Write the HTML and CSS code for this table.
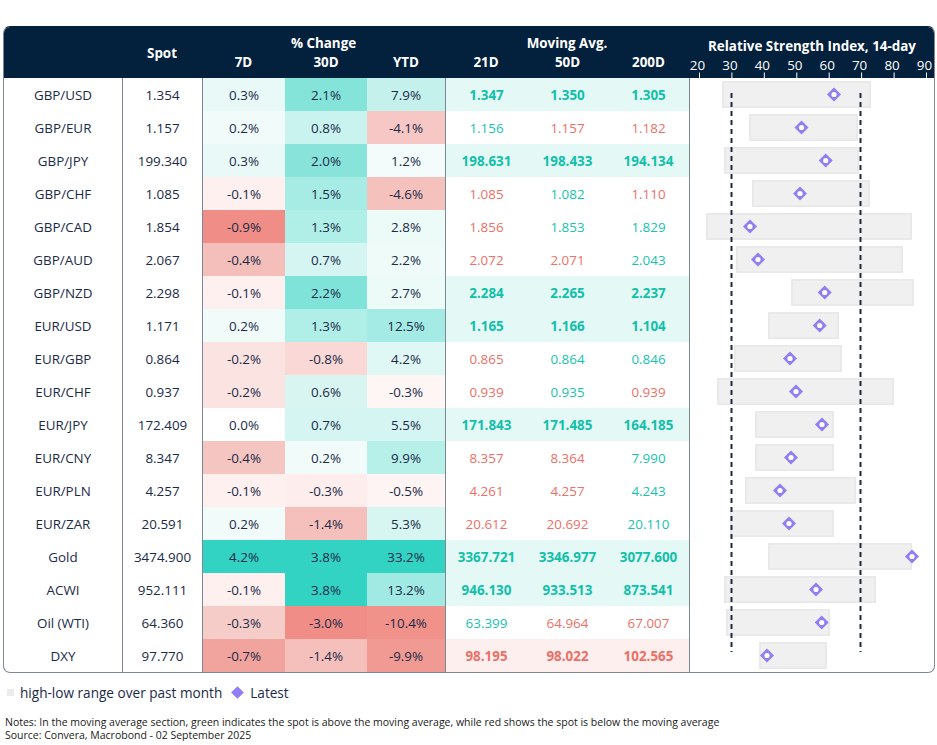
FILE: index.html
```html
<!DOCTYPE html>
<html>
<head>
<meta charset="utf-8">
<link rel="stylesheet" href="styles.css">
</head>
<body>
<div class="page">
  <div class="table">
    <div class="head cols">
      <div class="h-name"></div>
      <div class="h-spot">Spot</div>
      <div class="h-group pct">
        <div class="h-title">% Change</div>
        <div class="h-sub">7D</div><div class="h-sub">30D</div><div class="h-sub">YTD</div>
      </div>
      <div class="h-group ma">
        <div class="h-title">Moving Avg.</div>
        <div class="h-sub">21D</div><div class="h-sub">50D</div><div class="h-sub">200D</div>
      </div>
      <div class="h-rsi">
        <div class="rsi-title">Relative Strength Index, 14-day</div>
        <svg class="scale" width="245" height="23" viewBox="0 0 245 23">
          <g class="scale-labels">
            <text x="8.5" y="9.5">20</text>
            <text x="40.9" y="9.5">30</text>
            <text x="73.3" y="9.5">40</text>
            <text x="105.8" y="9.5">50</text>
            <text x="138.2" y="9.5">60</text>
            <text x="170.6" y="9.5">70</text>
            <text x="203.1" y="9.5">80</text>
            <text x="235.5" y="9.5">90</text>
          </g>
          <g class="ticks">
            <line x1="10.5" y1="17.5" x2="10.5" y2="23"/>
            <line x1="42.9" y1="17.5" x2="42.9" y2="23"/>
            <line x1="75.3" y1="17.5" x2="75.3" y2="23"/>
            <line x1="107.8" y1="17.5" x2="107.8" y2="23"/>
            <line x1="140.2" y1="17.5" x2="140.2" y2="23"/>
            <line x1="172.6" y1="17.5" x2="172.6" y2="23"/>
            <line x1="205.1" y1="17.5" x2="205.1" y2="23"/>
            <line x1="237.5" y1="17.5" x2="237.5" y2="23"/>
          </g>
        </svg>
      </div>
    </div>

    <div class="body cols">
      <div class="chart">
        <svg width="244" height="594" viewBox="0 0 244 594">
          <g class="bars">
            <rect x="33" y="4" width="147" height="25"/>
            <rect x="60" y="37" width="107" height="25"/>
            <rect x="35" y="70" width="133" height="25"/>
            <rect x="63" y="103" width="116" height="25"/>
            <rect x="17" y="136" width="204" height="25"/>
            <rect x="47" y="169" width="165" height="25"/>
            <rect x="102" y="202" width="121" height="25"/>
            <rect x="79" y="235" width="69" height="25"/>
            <rect x="45" y="268" width="106" height="25"/>
            <rect x="28" y="301" width="175" height="25"/>
            <rect x="66" y="334" width="77" height="25"/>
            <rect x="66" y="367" width="77" height="25"/>
            <rect x="56" y="400" width="109" height="25"/>
            <rect x="41" y="433" width="102" height="25"/>
            <rect x="79" y="466" width="142" height="25"/>
            <rect x="35" y="499" width="150" height="25"/>
            <rect x="37" y="532" width="102" height="25"/>
            <rect x="70" y="565" width="66" height="25"/>
          </g>
          <g class="dash">
            <line x1="41.5" y1="15" x2="41.5" y2="574"/>
            <line x1="170.5" y1="15" x2="170.5" y2="574"/>
          </g>
          <g class="marks">
            <g transform="translate(144 16.5)"><path d="M0 -7 L7 0 L0 7 L-7 0 Z"/><circle r="2.6"/></g>
            <g transform="translate(111.5 49.5)"><path d="M0 -7 L7 0 L0 7 L-7 0 Z"/><circle r="2.6"/></g>
            <g transform="translate(135.7 82.5)"><path d="M0 -7 L7 0 L0 7 L-7 0 Z"/><circle r="2.6"/></g>
            <g transform="translate(110 115.5)"><path d="M0 -7 L7 0 L0 7 L-7 0 Z"/><circle r="2.6"/></g>
            <g transform="translate(60 148.5)"><path d="M0 -7 L7 0 L0 7 L-7 0 Z"/><circle r="2.6"/></g>
            <g transform="translate(68 181.5)"><path d="M0 -7 L7 0 L0 7 L-7 0 Z"/><circle r="2.6"/></g>
            <g transform="translate(134.7 214.5)"><path d="M0 -7 L7 0 L0 7 L-7 0 Z"/><circle r="2.6"/></g>
            <g transform="translate(129.7 247.5)"><path d="M0 -7 L7 0 L0 7 L-7 0 Z"/><circle r="2.6"/></g>
            <g transform="translate(100 280.5)"><path d="M0 -7 L7 0 L0 7 L-7 0 Z"/><circle r="2.6"/></g>
            <g transform="translate(106 313.5)"><path d="M0 -7 L7 0 L0 7 L-7 0 Z"/><circle r="2.6"/></g>
            <g transform="translate(132 346.5)"><path d="M0 -7 L7 0 L0 7 L-7 0 Z"/><circle r="2.6"/></g>
            <g transform="translate(101 379.5)"><path d="M0 -7 L7 0 L0 7 L-7 0 Z"/><circle r="2.6"/></g>
            <g transform="translate(90 412.5)"><path d="M0 -7 L7 0 L0 7 L-7 0 Z"/><circle r="2.6"/></g>
            <g transform="translate(99 445.5)"><path d="M0 -7 L7 0 L0 7 L-7 0 Z"/><circle r="2.6"/></g>
            <g transform="translate(222 478.5)"><path d="M0 -7 L7 0 L0 7 L-7 0 Z"/><circle r="2.6"/></g>
            <g transform="translate(126 511.5)"><path d="M0 -7 L7 0 L0 7 L-7 0 Z"/><circle r="2.6"/></g>
            <g transform="translate(131.7 544.5)"><path d="M0 -7 L7 0 L0 7 L-7 0 Z"/><circle r="2.6"/></g>
            <g transform="translate(77 577.5)"><path d="M0 -7 L7 0 L0 7 L-7 0 Z"/><circle r="2.6"/></g>
          </g>
        </svg>
      </div>

      <div class="c">GBP/USD</div><div class="c spot">1.354</div>
      <div class="c d7" style="background:#e9f9f7">0.3%</div><div class="c" style="background:#84e4da">2.1%</div><div class="c" style="background:#c5f1ec">7.9%</div>
      <div class="c m1 up b">1.347</div><div class="c up b">1.350</div><div class="c up b">1.305</div>

      <div class="c">GBP/EUR</div><div class="c spot">1.157</div>
      <div class="c d7" style="background:#f0fbfa">0.2%</div><div class="c" style="background:#c9f3ef">0.8%</div><div class="c" style="background:#f6c7c4">-4.1%</div>
      <div class="c m1 g">1.156</div><div class="c r">1.157</div><div class="c r">1.182</div>

      <div class="c">GBP/JPY</div><div class="c spot">199.340</div>
      <div class="c d7" style="background:#e9f9f7">0.3%</div><div class="c" style="background:#88e4db">2.0%</div><div class="c" style="background:#f4fcfb">1.2%</div>
      <div class="c m1 up b">198.631</div><div class="c up b">198.433</div><div class="c up b">194.134</div>

      <div class="c">GBP/CHF</div><div class="c spot">1.085</div>
      <div class="c d7" style="background:#fdf0ef">-0.1%</div><div class="c" style="background:#a6ece5">1.5%</div><div class="c" style="background:#f5c1bd">-4.6%</div>
      <div class="c m1 r">1.085</div><div class="c g">1.082</div><div class="c r">1.110</div>

      <div class="c">GBP/CAD</div><div class="c spot">1.854</div>
      <div class="c d7" style="background:#ef8d86">-0.9%</div><div class="c" style="background:#b0eee8">1.3%</div><div class="c" style="background:#ecfaf8">2.8%</div>
      <div class="c m1 r">1.856</div><div class="c g">1.853</div><div class="c g">1.829</div>

      <div class="c">GBP/AUD</div><div class="c spot">2.067</div>
      <div class="c d7" style="background:#f4bfbb">-0.4%</div><div class="c" style="background:#d5f5f2">0.7%</div><div class="c" style="background:#eefbf9">2.2%</div>
      <div class="c m1 r">2.072</div><div class="c r">2.071</div><div class="c g">2.043</div>

      <div class="c">GBP/NZD</div><div class="c spot">2.298</div>
      <div class="c d7" style="background:#fdf0ef">-0.1%</div><div class="c" style="background:#80e3d9">2.2%</div><div class="c" style="background:#ecfaf8">2.7%</div>
      <div class="c m1 up b">2.284</div><div class="c up b">2.265</div><div class="c up b">2.237</div>

      <div class="c">EUR/USD</div><div class="c spot">1.171</div>
      <div class="c d7" style="background:#f0fbfa">0.2%</div><div class="c" style="background:#b0eee8">1.3%</div><div class="c" style="background:#a3ebe4">12.5%</div>
      <div class="c m1 up b">1.165</div><div class="c up b">1.166</div><div class="c up b">1.104</div>

      <div class="c">EUR/GBP</div><div class="c spot">0.864</div>
      <div class="c d7" style="background:#fbe3e1">-0.2%</div><div class="c" style="background:#f9d8d5">-0.8%</div><div class="c" style="background:#e0f8f5">4.2%</div>
      <div class="c m1 r">0.865</div><div class="c g">0.864</div><div class="c g">0.846</div>

      <div class="c">EUR/CHF</div><div class="c spot">0.937</div>
      <div class="c d7" style="background:#fbe3e1">-0.2%</div><div class="c" style="background:#d8f5f2">0.6%</div><div class="c" style="background:#fdf6f5">-0.3%</div>
      <div class="c m1 r">0.939</div><div class="c g">0.935</div><div class="c r">0.939</div>

      <div class="c">EUR/JPY</div><div class="c spot">172.409</div>
      <div class="c d7" style="background:#ffffff">0.0%</div><div class="c" style="background:#d5f5f2">0.7%</div><div class="c" style="background:#d5f5f2">5.5%</div>
      <div class="c m1 up b">171.843</div><div class="c up b">171.485</div><div class="c up b">164.185</div>

      <div class="c">EUR/CNY</div><div class="c spot">8.347</div>
      <div class="c d7" style="background:#f5c5c1">-0.4%</div><div class="c" style="background:#f0fbfa">0.2%</div><div class="c" style="background:#b7efe9">9.9%</div>
      <div class="c m1 r">8.357</div><div class="c r">8.364</div><div class="c g">7.990</div>

      <div class="c">EUR/PLN</div><div class="c spot">4.257</div>
      <div class="c d7" style="background:#fdf0ef">-0.1%</div><div class="c" style="background:#fdeeed">-0.3%</div><div class="c" style="background:#fdf4f3">-0.5%</div>
      <div class="c m1 r">4.261</div><div class="c r">4.257</div><div class="c g">4.243</div>

      <div class="c">EUR/ZAR</div><div class="c spot">20.591</div>
      <div class="c d7" style="background:#f0fbfa">0.2%</div><div class="c" style="background:#f5c0bc">-1.4%</div><div class="c" style="background:#d7f6f2">5.3%</div>
      <div class="c m1 r">20.612</div><div class="c r">20.692</div><div class="c g">20.110</div>

      <div class="c">Gold</div><div class="c spot">3474.900</div>
      <div class="c d7" style="background:#33d3c4">4.2%</div><div class="c" style="background:#33d3c4">3.8%</div><div class="c" style="background:#33d3c4">33.2%</div>
      <div class="c m1 up b">3367.721</div><div class="c up b">3346.977</div><div class="c up b">3077.600</div>

      <div class="c">ACWI</div><div class="c spot">952.111</div>
      <div class="c d7" style="background:#fdf0ef">-0.1%</div><div class="c" style="background:#33d3c4">3.8%</div><div class="c" style="background:#a0eae3">13.2%</div>
      <div class="c m1 up b">946.130</div><div class="c up b">933.513</div><div class="c up b">873.541</div>

      <div class="c">Oil (WTI)</div><div class="c spot">64.360</div>
      <div class="c d7" style="background:#f6ccc8">-0.3%</div><div class="c" style="background:#ef8d86">-3.0%</div><div class="c" style="background:#f0918a">-10.4%</div>
      <div class="c m1 g">63.399</div><div class="c r">64.964</div><div class="c r">67.007</div>

      <div class="c">DXY</div><div class="c spot">97.770</div>
      <div class="c d7" style="background:#f1a39d">-0.7%</div><div class="c" style="background:#f5c0bc">-1.4%</div><div class="c" style="background:#f19a93">-9.9%</div>
      <div class="c m1 down b">98.195</div><div class="c down b">98.022</div><div class="c down b">102.565</div>
    </div>
  </div>

  <div class="legend">
    <span class="lg-box"></span><span>high-low range over past month</span>
    <span class="lg-diamond"></span><span>Latest</span>
  </div>

  <div class="notes">
    <div>Notes: In the moving average section, green indicates the spot is above the moving average, while red shows the spot is below the moving average</div>
    <div>Source: Convera, Macrobond - 02 September 2025</div>
  </div>
</div>
</body>
</html>
```

FILE: styles.css
```css
body {
  margin: 0;
  background: #ffffff;
  font-family: "Open Sans", "Noto Sans", sans-serif;
  color: #1b2a47;
}

.page {
  padding: 26px 0 0 3px;
  width: 932px;
}

.table {
  width: 932px;
  box-sizing: border-box;
  border: 1px solid #7c8896;
  border-top-color: #03203c;
  border-radius: 7px;
  overflow: hidden;
}

.cols {
  display: grid;
  grid-template-columns: 118px 80px 83px 82px 78px 82px 81px 81px 245px;
}

/* header */
.head {
  height: 51px;
  background: #03203c;
  color: #ffffff;
  font-size: 13.4px;
  font-weight: 700;
}

.h-spot {
  display: flex;
  align-items: center;
  justify-content: center;
}

.h-group {
  display: grid;
  grid-template-rows: 19px 18px;
  padding-top: 7px;
  text-align: center;
  line-height: 18px;
}

.h-group.pct {
  grid-column: 3 / 6;
  grid-template-columns: 83px 82px 78px;
}

.h-group.ma {
  grid-column: 6 / 9;
  grid-template-columns: 82px 81px 81px;
}

.h-title {
  grid-column: 1 / -1;
  line-height: 19px;
}

.h-rsi {
  display: flex;
  flex-direction: column;
  padding-top: 10px;
}

.rsi-title {
  line-height: 18px;
  text-align: center;
  padding-left: 1px;
  white-space: nowrap;
}

.scale {
  display: block;
}

.scale-labels text {
  fill: #ffffff;
  font-family: "Open Sans", "Noto Sans", sans-serif;
  font-size: 13.4px;
  font-weight: 400;
  text-anchor: middle;
  dominant-baseline: central;
}

.ticks line {
  stroke: #ffffff;
  stroke-width: 1;
}

/* body */
.body {
  grid-auto-rows: 33px;
  font-size: 13.4px;
}

.chart {
  grid-column: 9;
  grid-row: 1 / 19;
  border-left: 1px solid #7c8896;
}

.chart svg {
  display: block;
}

.bars rect {
  fill: #f0f0f0;
  stroke: #e9e9e9;
  stroke-width: 2;
}

.dash line {
  stroke: #1d2b3f;
  stroke-width: 2;
  stroke-dasharray: 5 4;
}

.marks path {
  fill: #8f7ef5;
}

.marks circle {
  fill: #ffffff;
}

.c {
  display: flex;
  align-items: center;
  justify-content: center;
  white-space: nowrap;
}

.spot,
.d7,
.m1 {
  border-left: 1px solid #7c8896;
}

.g { color: #16c3ad; }
.r { color: #ec7067; }
.b { font-weight: 700; }
.up { background: #e4f8f5; color: #12c0aa; }
.down { background: #fcefee; color: #ec6f66; }

/* legend & notes */
.legend {
  display: flex;
  align-items: center;
  margin-top: 10px;
  padding-left: 4px;
  height: 18px;
  font-size: 13.6px;
  color: #1b2a47;
}

.lg-box {
  width: 7px;
  height: 7px;
  background: #ececec;
  margin-right: 6px;
}

.lg-diamond {
  width: 9px;
  height: 9px;
  background: #8f7ef5;
  transform: rotate(45deg);
  margin: 0 8px 0 11px;
}

.notes {
  margin-top: 15px;
  padding-left: 2px;
  font-size: 10.5px;
  line-height: 12.5px;
  color: #1a1a1a;
}
```
